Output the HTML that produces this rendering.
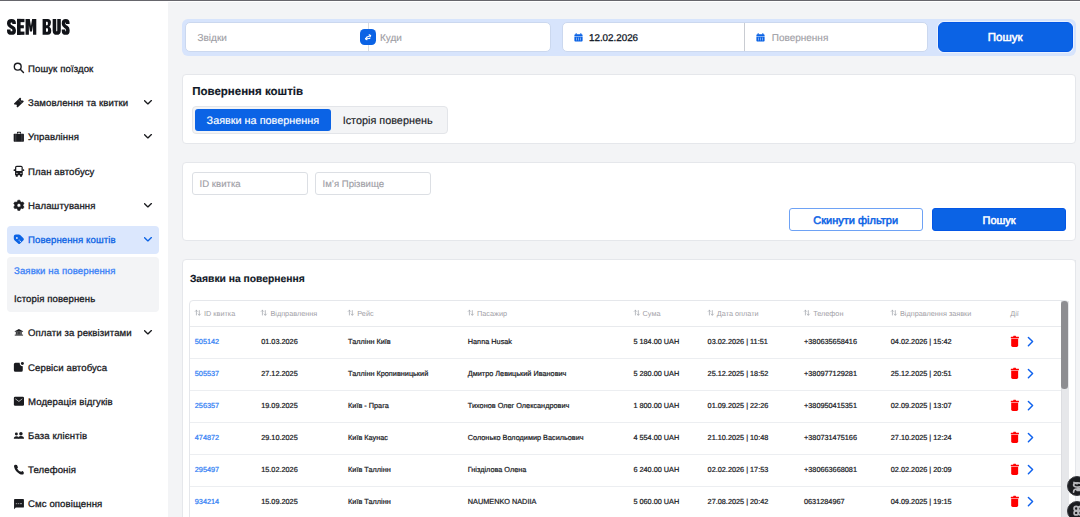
<!DOCTYPE html>
<html><head><meta charset="utf-8">
<style>
*{box-sizing:border-box;margin:0;padding:0}
html,body{width:1080px;height:517px;overflow:hidden}
body{position:relative;background:#f3f4f6;font-family:"Liberation Sans",sans-serif;color:#111827;text-rendering:geometricPrecision}
.a{position:absolute}
.t{white-space:nowrap;-webkit-text-stroke:0.15px currentColor}
.topline{left:0;top:0;width:1080px;height:1px;background:#66666c}
.topwhite{left:0;top:1px;width:1080px;height:1px;background:#fff}
.side{left:0;top:1px;width:168px;height:516px;background:#fff}
.logo{left:7px;top:14px;font-weight:bold;font-size:22px;transform-origin:0 0;transform:scaleX(.63);color:#111318;white-space:nowrap;line-height:26px}
.mt{-webkit-text-stroke:0.3px currentColor;letter-spacing:0.1px}
.med{-webkit-text-stroke:0.3px currentColor}
.cell{-webkit-text-stroke:0.22px currentColor}
.activebg{left:7px;top:226.1px;width:152px;height:27.5px;background:#dbe7fd;border-radius:4px}
.subbg{left:7px;top:257.3px;width:152px;height:54.3px;background:#f3f4f6;border-radius:4px}
.card{left:182px;width:894px;background:#fff;border:1px solid #e5e7eb;border-radius:4px}
.finp{background:#fff;border:1px solid #dcdfe4;border-radius:3px}
.sb{font-weight:bold}

</style></head><body>
<div class="a topline"></div>
<div class="a topwhite"></div>
<div class="a side"></div>
<svg class="a" style="left:0;top:10px;width:80px;height:35px" viewBox="0 0 1080 472"><g fill="none" stroke="#111318" stroke-width="48" stroke-linecap="butt" stroke-linejoin="round"><path d="M190 188 V172 Q190 144 155 144 Q119 144 119 175 V190 Q119 210 150 226 L164 233 Q191 247 191 270 V282 Q191 311 155 311 Q119 311 119 282 V262"/><path d="M735 120 V275 Q735 311 765 311 Q797 311 797 275 V120"/><path d="M915 188 V172 Q915 144 887 144 Q858 144 858 175 V190 Q858 210 885 226 L897 233 Q916 247 916 270 V282 Q916 311 887 311 Q858 311 858 282 V262"/></g><g fill="#111318"><rect x="230" y="120" width="48" height="215"/><rect x="230" y="120" width="100" height="44"/><rect x="230" y="205" width="92" height="42"/><rect x="230" y="291" width="100" height="44"/><path d="M345 120 H402 L418 215 L434 120 H490 V335 H446 V205 L432 290 H404 L390 205 V335 H345Z"/><path d="M575 120 H645 Q688 120 688 170 Q688 208 665 225 Q692 240 692 280 Q692 335 645 335 H575Z M621 160 V205 H638 Q646 205 646 190 V175 Q646 160 638 160Z M621 245 V295 H640 Q648 295 648 280 V262 Q648 245 640 245Z" fill-rule="evenodd"/></g></svg>
<div class="a activebg"></div>
<div class="a subbg"></div>
<svg class="a" style="left:10px;top:58px;width:20px;height:20px;color:#1a1b1f" viewBox="0 0 517 517"><circle cx="200" cy="225" r="88" fill="none" stroke="currentColor" stroke-width="36"/><path d="M272 297 L348 373" stroke="currentColor" stroke-width="38" stroke-linecap="round"/></svg><div class="a t mt" style="left:28px;top:63.98px;font-size:9.6px;line-height:12.0px;color:#1a1b1f">Пошук поїздок</div><svg class="a" style="left:10px;top:95px;width:20px;height:20px;color:#1a1b1f" viewBox="0 0 517 517"><g transform="translate(229 195) rotate(-44)"><path d="M-104 -70 H104 Q114 -70 114 -60 V-30 A30 30 0 0 0 114 30 V60 Q114 70 104 70 H-104 Q-114 70 -114 60 V30 A30 30 0 0 0 -114 -30 V-60 Q-114 -70 -104 -70Z" fill="currentColor"/><path d="M42 -62 V62" stroke="#fff" stroke-opacity=".75" stroke-width="12" stroke-dasharray="16 6"/></g></svg><div class="a t mt" style="left:28px;top:97.98px;font-size:9.6px;line-height:12.0px;color:#1a1b1f">Замовлення та квитки</div><svg class="a" style="left:144px;top:100.40px;width:9px;height:6px;color:#1a1b1f" viewBox="0 0 9 6"><path d="M0.6 0.7 L3.9 3.9 L7.4 0.6" fill="none" stroke="currentColor" stroke-width="1.35" stroke-linecap="round" stroke-linejoin="round"/></svg><svg class="a" style="left:10px;top:128px;width:20px;height:20px;color:#1a1b1f" viewBox="0 0 517 517"><path d="M195 95 H270 Q285 95 285 110 V150 H265 V128 Q265 122 259 122 H206 Q200 122 200 128 V150 H180 V110 Q180 95 195 95Z" fill="currentColor"/><rect x="95" y="150" width="265" height="205" rx="16" fill="currentColor"/><path d="M150 152 V353 M307 152 V353" stroke="#fff" stroke-opacity=".45" stroke-width="11"/></svg><div class="a t mt" style="left:28px;top:131.98px;font-size:9.6px;line-height:12.0px;color:#1a1b1f">Управління</div><svg class="a" style="left:144px;top:134.40px;width:9px;height:6px;color:#1a1b1f" viewBox="0 0 9 6"><path d="M0.6 0.7 L3.9 3.9 L7.4 0.6" fill="none" stroke="currentColor" stroke-width="1.35" stroke-linecap="round" stroke-linejoin="round"/></svg><svg class="a" style="left:10px;top:162px;width:20px;height:20px;color:#1a1b1f" viewBox="0 0 517 517"><path d="M175 100 H285 Q330 100 330 145 V340 H130 V145 Q130 100 175 100Z" fill="currentColor"/><rect x="162" y="132" width="136" height="103" rx="10" fill="#fff"/><circle cx="180" cy="292" r="17" fill="#fff"/><circle cx="283" cy="292" r="17" fill="#fff"/><rect x="93" y="190" width="42" height="42" rx="14" fill="currentColor"/><rect x="325" y="190" width="42" height="42" rx="14" fill="currentColor"/><rect x="148" y="320" width="54" height="62" rx="16" fill="currentColor"/><rect x="258" y="320" width="54" height="62" rx="16" fill="currentColor"/></svg><div class="a t mt" style="left:28px;top:166.98px;font-size:9.6px;line-height:12.0px;color:#1a1b1f">План автобусу</div><svg class="a" style="left:10px;top:196px;width:20px;height:20px;color:#1a1b1f" viewBox="0 0 517 517"><g transform="translate(230 240)"><path d="M-28 -132 H28 L36 -95 A100 100 0 0 1 70 -76 L106 -88 L134 -40 L106 -14 A100 100 0 0 1 106 14 L134 40 L106 88 L70 76 A100 100 0 0 1 36 95 L28 132 H-28 L-36 95 A100 100 0 0 1 -70 76 L-106 88 L-134 40 L-106 14 A100 100 0 0 1 -106 -14 L-134 -40 L-106 -88 L-70 -76 A100 100 0 0 1 -36 -95Z M0 -48 A48 48 0 1 0 0 48 A48 48 0 1 0 0 -48Z" fill="currentColor" fill-rule="evenodd" stroke="currentColor" stroke-width="14" stroke-linejoin="round"/></g></svg><div class="a t mt" style="left:28px;top:200.98px;font-size:9.6px;line-height:12.0px;color:#1a1b1f">Налаштування</div><svg class="a" style="left:144px;top:203.40px;width:9px;height:6px;color:#1a1b1f" viewBox="0 0 9 6"><path d="M0.6 0.7 L3.9 3.9 L7.4 0.6" fill="none" stroke="currentColor" stroke-width="1.35" stroke-linecap="round" stroke-linejoin="round"/></svg><svg class="a" style="left:10px;top:230px;width:20px;height:20px;color:#0b63e5" viewBox="0 0 517 517"><path d="M150 118 H228 Q252 118 270 136 L348 214 Q372 240 348 266 L262 352 Q236 378 210 352 L122 272 Q98 250 98 222 V170 Q98 118 150 118Z" fill="currentColor"/><circle cx="178" cy="208" r="24" fill="#dbe7fd"/><circle cx="236" cy="262" r="14" fill="#dbe7fd" fill-opacity=".8"/><circle cx="268" cy="295" r="15" fill="#dbe7fd"/></svg><div class="a t mt" style="left:28px;top:234.98px;font-size:9.6px;line-height:12.0px;color:#0b63e5">Повернення коштів</div><svg class="a" style="left:144px;top:237.40px;width:9px;height:6px;color:#0b63e5" viewBox="0 0 9 6"><path d="M0.6 0.7 L3.9 3.9 L7.4 0.6" fill="none" stroke="currentColor" stroke-width="1.35" stroke-linecap="round" stroke-linejoin="round"/></svg><div class="a t mt" style="left:14px;top:265.98px;font-size:9.6px;line-height:12.0px;color:#3b82f6">Заявки на повернення</div><div class="a t mt" style="left:14px;top:293.98px;font-size:9.6px;line-height:12.0px;color:#1a1b1f">Історія повернень</div><svg class="a" style="left:10px;top:323px;width:20px;height:20px;color:#1a1b1f" viewBox="0 0 517 517"><path d="M230 152 L338 212 V228 H122 V212Z" fill="currentColor"/><rect x="150" y="228" width="155" height="75" fill="currentColor" fill-opacity=".85"/><path d="M190 232 V298 M270 232 V298" stroke="#fff" stroke-opacity=".35" stroke-width="14"/><rect x="122" y="300" width="216" height="30" rx="6" fill="currentColor" fill-opacity=".75"/></svg><div class="a t mt" style="left:28px;top:327.98px;font-size:9.6px;line-height:12.0px;color:#1a1b1f">Оплати за реквізитами</div><svg class="a" style="left:144px;top:330.40px;width:9px;height:6px;color:#1a1b1f" viewBox="0 0 9 6"><path d="M0.6 0.7 L3.9 3.9 L7.4 0.6" fill="none" stroke="currentColor" stroke-width="1.35" stroke-linecap="round" stroke-linejoin="round"/></svg><svg class="a" style="left:10px;top:357px;width:20px;height:20px;color:#1a1b1f" viewBox="0 0 517 517"><path d="M250 150 H140 Q100 150 100 190 V340 Q100 380 140 380 H290 Q330 380 330 340 V240 A90 90 0 0 1 250 150Z" fill="currentColor"/><circle cx="320" cy="168" r="38" fill="currentColor"/></svg><div class="a t mt" style="left:28px;top:362.98px;font-size:9.6px;line-height:12.0px;color:#1a1b1f">Сервіси автобуса</div><svg class="a" style="left:10px;top:392px;width:20px;height:20px;color:#1a1b1f" viewBox="0 0 517 517"><rect x="100" y="125" width="262" height="230" rx="32" fill="currentColor"/><path d="M145 182 L230 245 L310 182" fill="none" stroke="#fff" stroke-opacity=".85" stroke-width="20" stroke-linecap="round" stroke-linejoin="round"/></svg><div class="a t mt" style="left:28px;top:396.98px;font-size:9.6px;line-height:12.0px;color:#1a1b1f">Модерація відгуків</div><svg class="a" style="left:10px;top:426px;width:20px;height:20px;color:#1a1b1f" viewBox="0 0 517 517"><circle cx="165" cy="205" r="38" fill="currentColor"/><circle cx="282" cy="200" r="45" fill="currentColor"/><path d="M98 332 Q98 262 165 262 Q212 262 222 300 V332Z" fill="currentColor"/><path d="M205 332 Q205 258 282 258 Q362 258 362 332Z" fill="currentColor"/></svg><div class="a t mt" style="left:28px;top:430.98px;font-size:9.6px;line-height:12.0px;color:#1a1b1f">База клієнтів</div><svg class="a" style="left:10px;top:460px;width:20px;height:20px;color:#1a1b1f" viewBox="0 0 517 517"><path d="M118 128 Q150 118 180 132 L205 185 Q205 205 182 222 Q215 290 292 305 Q310 285 328 285 L355 318 Q365 350 340 372 Q300 388 250 360 Q135 300 105 175 Q100 140 118 128Z" fill="currentColor"/></svg><div class="a t mt" style="left:28px;top:464.98px;font-size:9.6px;line-height:12.0px;color:#1a1b1f">Телефонія</div><svg class="a" style="left:10px;top:494px;width:20px;height:20px;color:#1a1b1f" viewBox="0 0 517 517"><path d="M125 128 H340 Q360 128 360 150 V330 Q360 352 340 352 H150 L105 392 V150 Q105 128 125 128Z" fill="currentColor"/><path d="M150 250 H182 M200 250 H232 M252 250 H310" stroke="#fff" stroke-opacity=".75" stroke-width="20"/></svg><div class="a t mt" style="left:28px;top:498.98px;font-size:9.6px;line-height:12.0px;color:#1a1b1f">Смс оповіщення</div>
<div class="a" style="left:182px;top:19px;width:894px;height:36.6px;background:#d7e4fc;border-radius:6px"></div><div class="a" style="left:185px;top:22px;width:366px;height:30px;background:#fff;border:1px solid #cbd8ef;border-radius:5px"></div><div class="a" style="left:368px;top:23px;width:1px;height:28px;background:#d9dce1"></div><div class="a t " style="left:197.5px;top:32.97px;font-size:10px;line-height:12.5px;color:#9fa0a6">Звідки</div><div class="a t " style="left:380px;top:32.97px;font-size:10px;line-height:12.5px;color:#9fa0a6">Куди</div><div class="a" style="left:360px;top:29.2px;width:16.2px;height:15.8px;background:#0b63e5;border-radius:4.5px"></div><svg class="a" style="left:356px;top:25px;width:24px;height:24px" viewBox="0 0 517 517"><g fill="none" stroke="#fff" stroke-width="24" stroke-linecap="round" stroke-linejoin="round"><path d="M228 262 L312 228"/><path d="M284 212 L316 226 L300 258"/><path d="M298 290 L210 296"/><path d="M232 268 L204 296 L236 318"/></g></svg><div class="a" style="left:562px;top:22px;width:366px;height:30px;background:#fff;border:1px solid #cbd8ef;border-radius:5px"></div><div class="a" style="left:744px;top:23px;width:1px;height:28px;background:#c9ccd2"></div><svg class="a" style="left:573.8px;top:32.6px;width:9px;height:9px;color:#0b63e5" viewBox="0 0 9 9"><path d="M2.2 .3 V1.8 M6.8 .3 V1.8" stroke="currentColor" stroke-width="1.1"/><path d="M.4 2.6 C.4 1.8 .9 1.3 1.6 1.3 H7.4 C8.1 1.3 8.6 1.8 8.6 2.6 V3.4 H.4Z M.4 4.1 H8.6 V7.4 C8.6 8 8.1 8.5 7.4 8.5 H1.6 C.9 8.5 .4 8 .4 7.4Z" fill="currentColor"/><path d="M2 5.2 H2.9 M4 5.2 H4.9 M6 5.2 H6.9 M2 6.8 H2.9 M4 6.8 H4.9 M6 6.8 H6.9" stroke="#fff" stroke-width=".7"/></svg><div class="a t med" style="left:589px;top:33.04px;font-size:9.8px;line-height:12.25px;color:#111827">12.02.2026</div><svg class="a" style="left:756px;top:32.6px;width:9px;height:9px;color:#0b63e5" viewBox="0 0 9 9"><path d="M2.2 .3 V1.8 M6.8 .3 V1.8" stroke="currentColor" stroke-width="1.1"/><path d="M.4 2.6 C.4 1.8 .9 1.3 1.6 1.3 H7.4 C8.1 1.3 8.6 1.8 8.6 2.6 V3.4 H.4Z M.4 4.1 H8.6 V7.4 C8.6 8 8.1 8.5 7.4 8.5 H1.6 C.9 8.5 .4 8 .4 7.4Z" fill="currentColor"/><path d="M2 5.2 H2.9 M4 5.2 H4.9 M6 5.2 H6.9 M2 6.8 H2.9 M4 6.8 H4.9 M6 6.8 H6.9" stroke="#fff" stroke-width=".7"/></svg><div class="a t " style="left:771.7px;top:32.97px;font-size:10px;line-height:12.5px;color:#9fa0a6">Повернення</div><div class="a" style="left:938.3px;top:22.2px;width:134.4px;height:29.8px;background:#0b63e5;border:1px solid #0457e6;border-radius:6px;box-shadow:0 0 0 1px #e9f1fe"></div><div class="a t " style="left:987.8px;top:31.02px;font-size:11.5px;line-height:14.38px;color:#fff;-webkit-text-stroke:0.5px #fff">Пошук</div><div class="a card" style="top:74px;height:70px"></div><div class="a t " style="left:192.2px;top:85.02px;font-size:11.5px;line-height:14.38px;font-weight:bold;color:#111827">Повернення коштів</div><div class="a" style="left:192px;top:106.2px;width:255.5px;height:27.4px;background:#f3f4f6;border:1px solid #e3e5e9;border-radius:4px"></div><div class="a" style="left:194.7px;top:109.4px;width:136.1px;height:21.6px;background:#0b63e5;border-radius:3px"></div><div class="a t " style="left:206.6px;top:115.02px;font-size:10.85px;line-height:13.56px;color:#fff">Заявки на повернення</div><div class="a t " style="left:342.7px;top:115.02px;font-size:10.85px;line-height:13.56px;color:#1a1b1f">Історія повернень</div><div class="a card" style="top:162px;height:79px"></div><div class="a finp" style="left:191.5px;top:171.5px;width:116.5px;height:23.3px"></div><div class="a finp" style="left:314.8px;top:171.5px;width:116.5px;height:23.3px"></div><div class="a t " style="left:199.6px;top:178.98px;font-size:9.6px;line-height:12.0px;color:#9fa0a6">ID квитка</div><div class="a t " style="left:322.5px;top:178.98px;font-size:9.6px;line-height:12.0px;color:#9fa0a6">Ім’я Прізвище</div><div class="a" style="left:789px;top:208px;width:134px;height:23px;background:#fff;border:1px solid #6ea2f5;border-radius:3px"></div><div class="a t " style="left:813.3px;top:215.00px;font-size:11px;line-height:13.75px;color:#0b63e5;-webkit-text-stroke:0.5px #0b63e5">Скинути фільтри</div><div class="a" style="left:932.2px;top:208.2px;width:134px;height:23px;background:#0b63e5;border:1px solid #0457e6;border-radius:3px"></div><div class="a t " style="left:982.5px;top:215.00px;font-size:11px;line-height:13.75px;color:#fff;-webkit-text-stroke:0.5px #fff">Пошук</div><div class="a card" style="top:259px;height:300px"></div><div class="a t " style="left:189.9px;top:274.05px;font-size:10.3px;line-height:12.88px;font-weight:bold;color:#111827">Заявки на повернення</div>
<div class="a" style="left:189px;top:299.6px;width:880px;height:240px;border:1px solid #e5e7eb;border-radius:4px"></div><div class="a" style="left:190px;top:325.5px;width:872px;height:1px;background:#e8eaed"></div><svg class="a" style="left:192px;top:305px;width:20px;height:15px;color:#a3a7ae" viewBox="0 0 689 517"><g fill="none" stroke="currentColor" stroke-width="26" stroke-linecap="round" stroke-linejoin="round"><path d="M152 345 V180 M112 220 L152 180 L192 220"/><path d="M252 192 V352 M212 312 L252 352 L292 312"/></g></svg><div class="a t " style="left:204px;top:308.97px;font-size:7.3px;line-height:9.12px;color:#9fa0a6;-webkit-text-stroke:0">ID квитка</div><svg class="a" style="left:258.4px;top:305px;width:20px;height:15px;color:#a3a7ae" viewBox="0 0 689 517"><g fill="none" stroke="currentColor" stroke-width="26" stroke-linecap="round" stroke-linejoin="round"><path d="M152 345 V180 M112 220 L152 180 L192 220"/><path d="M252 192 V352 M212 312 L252 352 L292 312"/></g></svg><div class="a t " style="left:270.4px;top:308.97px;font-size:7.3px;line-height:9.12px;color:#9fa0a6;-webkit-text-stroke:0">Відправлення</div><svg class="a" style="left:345.3px;top:305px;width:20px;height:15px;color:#a3a7ae" viewBox="0 0 689 517"><g fill="none" stroke="currentColor" stroke-width="26" stroke-linecap="round" stroke-linejoin="round"><path d="M152 345 V180 M112 220 L152 180 L192 220"/><path d="M252 192 V352 M212 312 L252 352 L292 312"/></g></svg><div class="a t " style="left:357.3px;top:308.97px;font-size:7.3px;line-height:9.12px;color:#9fa0a6;-webkit-text-stroke:0">Рейс</div><svg class="a" style="left:465px;top:305px;width:20px;height:15px;color:#a3a7ae" viewBox="0 0 689 517"><g fill="none" stroke="currentColor" stroke-width="26" stroke-linecap="round" stroke-linejoin="round"><path d="M152 345 V180 M112 220 L152 180 L192 220"/><path d="M252 192 V352 M212 312 L252 352 L292 312"/></g></svg><div class="a t " style="left:477px;top:308.97px;font-size:7.3px;line-height:9.12px;color:#9fa0a6;-webkit-text-stroke:0">Пасажир</div><svg class="a" style="left:630.6px;top:305px;width:20px;height:15px;color:#a3a7ae" viewBox="0 0 689 517"><g fill="none" stroke="currentColor" stroke-width="26" stroke-linecap="round" stroke-linejoin="round"><path d="M152 345 V180 M112 220 L152 180 L192 220"/><path d="M252 192 V352 M212 312 L252 352 L292 312"/></g></svg><div class="a t " style="left:642.6px;top:308.97px;font-size:7.3px;line-height:9.12px;color:#9fa0a6;-webkit-text-stroke:0">Сума</div><svg class="a" style="left:704.8px;top:305px;width:20px;height:15px;color:#a3a7ae" viewBox="0 0 689 517"><g fill="none" stroke="currentColor" stroke-width="26" stroke-linecap="round" stroke-linejoin="round"><path d="M152 345 V180 M112 220 L152 180 L192 220"/><path d="M252 192 V352 M212 312 L252 352 L292 312"/></g></svg><div class="a t " style="left:716.8px;top:308.97px;font-size:7.3px;line-height:9.12px;color:#9fa0a6;-webkit-text-stroke:0">Дата оплати</div><svg class="a" style="left:801.2px;top:305px;width:20px;height:15px;color:#a3a7ae" viewBox="0 0 689 517"><g fill="none" stroke="currentColor" stroke-width="26" stroke-linecap="round" stroke-linejoin="round"><path d="M152 345 V180 M112 220 L152 180 L192 220"/><path d="M252 192 V352 M212 312 L252 352 L292 312"/></g></svg><div class="a t " style="left:813.2px;top:308.97px;font-size:7.3px;line-height:9.12px;color:#9fa0a6;-webkit-text-stroke:0">Телефон</div><svg class="a" style="left:888px;top:305px;width:20px;height:15px;color:#a3a7ae" viewBox="0 0 689 517"><g fill="none" stroke="currentColor" stroke-width="26" stroke-linecap="round" stroke-linejoin="round"><path d="M152 345 V180 M112 220 L152 180 L192 220"/><path d="M252 192 V352 M212 312 L252 352 L292 312"/></g></svg><div class="a t " style="left:900px;top:308.97px;font-size:7.3px;line-height:9.12px;color:#9fa0a6;-webkit-text-stroke:0">Відправлення заявки</div><div class="a t " style="left:1010.3px;top:308.97px;font-size:7.3px;line-height:9.12px;color:#9fa0a6;-webkit-text-stroke:0">Дії</div><div class="a" style="left:190px;top:357.5px;width:872px;height:1px;background:#eceef1"></div><div class="a t cell" style="left:194.8px;top:336.97px;font-size:7.3px;line-height:9.12px;color:#2f7df4">505142</div><div class="a t cell" style="left:261.2px;top:336.97px;font-size:7.3px;line-height:9.12px;color:#1a1b1f">01.03.2026</div><div class="a t cell" style="left:348.1px;top:336.97px;font-size:7.3px;line-height:9.12px;color:#1a1b1f">Таллінн Київ</div><div class="a t cell" style="left:467.8px;top:336.97px;font-size:7.3px;line-height:9.12px;color:#1a1b1f">Hanna Husak</div><div class="a t cell" style="left:633.4px;top:336.97px;font-size:7.3px;line-height:9.12px;color:#1a1b1f">5 184.00 UAH</div><div class="a t cell" style="left:707.5999999999999px;top:336.97px;font-size:7.3px;line-height:9.12px;color:#1a1b1f">03.02.2026 | 11:51</div><div class="a t cell" style="left:804.0px;top:336.97px;font-size:7.3px;line-height:9.12px;color:#1a1b1f">+380635658416</div><div class="a t cell" style="left:890.8px;top:336.97px;font-size:7.3px;line-height:9.12px;color:#1a1b1f">04.02.2026 | 15:42</div><svg class="a" style="left:1005px;top:332px;width:35px;height:20px" viewBox="0 0 905 517"><rect x="212" y="100" width="72" height="34" rx="10" fill="#ff0b0b"/><rect x="150" y="124" width="210" height="36" rx="8" fill="#ff0000"/><path d="M160 175 H340 V345 Q340 385 300 385 H200 Q160 385 160 345Z" fill="#ff0000"/><path d="M605 140 L713 248 L605 355" fill="none" stroke="#0f62ee" stroke-width="38" stroke-linecap="round" stroke-linejoin="round"/></svg><div class="a" style="left:190px;top:389.5px;width:872px;height:1px;background:#eceef1"></div><div class="a t cell" style="left:194.8px;top:368.97px;font-size:7.3px;line-height:9.12px;color:#2f7df4">505537</div><div class="a t cell" style="left:261.2px;top:368.97px;font-size:7.3px;line-height:9.12px;color:#1a1b1f">27.12.2025</div><div class="a t cell" style="left:348.1px;top:368.97px;font-size:7.3px;line-height:9.12px;color:#1a1b1f">Таллінн Кропивницький</div><div class="a t cell" style="left:467.8px;top:368.97px;font-size:7.3px;line-height:9.12px;color:#1a1b1f">Дмитро Левицький Иванович</div><div class="a t cell" style="left:633.4px;top:368.97px;font-size:7.3px;line-height:9.12px;color:#1a1b1f">5 280.00 UAH</div><div class="a t cell" style="left:707.5999999999999px;top:368.97px;font-size:7.3px;line-height:9.12px;color:#1a1b1f">25.12.2025 | 18:52</div><div class="a t cell" style="left:804.0px;top:368.97px;font-size:7.3px;line-height:9.12px;color:#1a1b1f">+380977129281</div><div class="a t cell" style="left:890.8px;top:368.97px;font-size:7.3px;line-height:9.12px;color:#1a1b1f">25.12.2025 | 20:51</div><svg class="a" style="left:1005px;top:364px;width:35px;height:20px" viewBox="0 0 905 517"><rect x="212" y="100" width="72" height="34" rx="10" fill="#ff0b0b"/><rect x="150" y="124" width="210" height="36" rx="8" fill="#ff0000"/><path d="M160 175 H340 V345 Q340 385 300 385 H200 Q160 385 160 345Z" fill="#ff0000"/><path d="M605 140 L713 248 L605 355" fill="none" stroke="#0f62ee" stroke-width="38" stroke-linecap="round" stroke-linejoin="round"/></svg><div class="a" style="left:190px;top:421.5px;width:872px;height:1px;background:#eceef1"></div><div class="a t cell" style="left:194.8px;top:400.97px;font-size:7.3px;line-height:9.12px;color:#2f7df4">256357</div><div class="a t cell" style="left:261.2px;top:400.97px;font-size:7.3px;line-height:9.12px;color:#1a1b1f">19.09.2025</div><div class="a t cell" style="left:348.1px;top:400.97px;font-size:7.3px;line-height:9.12px;color:#1a1b1f">Київ - Прага</div><div class="a t cell" style="left:467.8px;top:400.97px;font-size:7.3px;line-height:9.12px;color:#1a1b1f">Тихонов Олег Олександрович</div><div class="a t cell" style="left:633.4px;top:400.97px;font-size:7.3px;line-height:9.12px;color:#1a1b1f">1 800.00 UAH</div><div class="a t cell" style="left:707.5999999999999px;top:400.97px;font-size:7.3px;line-height:9.12px;color:#1a1b1f">01.09.2025 | 22:26</div><div class="a t cell" style="left:804.0px;top:400.97px;font-size:7.3px;line-height:9.12px;color:#1a1b1f">+380950415351</div><div class="a t cell" style="left:890.8px;top:400.97px;font-size:7.3px;line-height:9.12px;color:#1a1b1f">02.09.2025 | 13:07</div><svg class="a" style="left:1005px;top:396px;width:35px;height:20px" viewBox="0 0 905 517"><rect x="212" y="100" width="72" height="34" rx="10" fill="#ff0b0b"/><rect x="150" y="124" width="210" height="36" rx="8" fill="#ff0000"/><path d="M160 175 H340 V345 Q340 385 300 385 H200 Q160 385 160 345Z" fill="#ff0000"/><path d="M605 140 L713 248 L605 355" fill="none" stroke="#0f62ee" stroke-width="38" stroke-linecap="round" stroke-linejoin="round"/></svg><div class="a" style="left:190px;top:453.5px;width:872px;height:1px;background:#eceef1"></div><div class="a t cell" style="left:194.8px;top:432.97px;font-size:7.3px;line-height:9.12px;color:#2f7df4">474872</div><div class="a t cell" style="left:261.2px;top:432.97px;font-size:7.3px;line-height:9.12px;color:#1a1b1f">29.10.2025</div><div class="a t cell" style="left:348.1px;top:432.97px;font-size:7.3px;line-height:9.12px;color:#1a1b1f">Київ Каунас</div><div class="a t cell" style="left:467.8px;top:432.97px;font-size:7.3px;line-height:9.12px;color:#1a1b1f">Солонько Володимир Васильович</div><div class="a t cell" style="left:633.4px;top:432.97px;font-size:7.3px;line-height:9.12px;color:#1a1b1f">4 554.00 UAH</div><div class="a t cell" style="left:707.5999999999999px;top:432.97px;font-size:7.3px;line-height:9.12px;color:#1a1b1f">21.10.2025 | 10:48</div><div class="a t cell" style="left:804.0px;top:432.97px;font-size:7.3px;line-height:9.12px;color:#1a1b1f">+380731475166</div><div class="a t cell" style="left:890.8px;top:432.97px;font-size:7.3px;line-height:9.12px;color:#1a1b1f">27.10.2025 | 12:24</div><svg class="a" style="left:1005px;top:428px;width:35px;height:20px" viewBox="0 0 905 517"><rect x="212" y="100" width="72" height="34" rx="10" fill="#ff0b0b"/><rect x="150" y="124" width="210" height="36" rx="8" fill="#ff0000"/><path d="M160 175 H340 V345 Q340 385 300 385 H200 Q160 385 160 345Z" fill="#ff0000"/><path d="M605 140 L713 248 L605 355" fill="none" stroke="#0f62ee" stroke-width="38" stroke-linecap="round" stroke-linejoin="round"/></svg><div class="a" style="left:190px;top:485.5px;width:872px;height:1px;background:#eceef1"></div><div class="a t cell" style="left:194.8px;top:464.97px;font-size:7.3px;line-height:9.12px;color:#2f7df4">295497</div><div class="a t cell" style="left:261.2px;top:464.97px;font-size:7.3px;line-height:9.12px;color:#1a1b1f">15.02.2026</div><div class="a t cell" style="left:348.1px;top:464.97px;font-size:7.3px;line-height:9.12px;color:#1a1b1f">Київ Таллінн</div><div class="a t cell" style="left:467.8px;top:464.97px;font-size:7.3px;line-height:9.12px;color:#1a1b1f">Гнізділова Олена</div><div class="a t cell" style="left:633.4px;top:464.97px;font-size:7.3px;line-height:9.12px;color:#1a1b1f">6 240.00 UAH</div><div class="a t cell" style="left:707.5999999999999px;top:464.97px;font-size:7.3px;line-height:9.12px;color:#1a1b1f">02.02.2026 | 17:53</div><div class="a t cell" style="left:804.0px;top:464.97px;font-size:7.3px;line-height:9.12px;color:#1a1b1f">+380663668081</div><div class="a t cell" style="left:890.8px;top:464.97px;font-size:7.3px;line-height:9.12px;color:#1a1b1f">02.02.2026 | 20:09</div><svg class="a" style="left:1005px;top:460px;width:35px;height:20px" viewBox="0 0 905 517"><rect x="212" y="100" width="72" height="34" rx="10" fill="#ff0b0b"/><rect x="150" y="124" width="210" height="36" rx="8" fill="#ff0000"/><path d="M160 175 H340 V345 Q340 385 300 385 H200 Q160 385 160 345Z" fill="#ff0000"/><path d="M605 140 L713 248 L605 355" fill="none" stroke="#0f62ee" stroke-width="38" stroke-linecap="round" stroke-linejoin="round"/></svg><div class="a t cell" style="left:194.8px;top:496.97px;font-size:7.3px;line-height:9.12px;color:#2f7df4">934214</div><div class="a t cell" style="left:261.2px;top:496.97px;font-size:7.3px;line-height:9.12px;color:#1a1b1f">15.09.2025</div><div class="a t cell" style="left:348.1px;top:496.97px;font-size:7.3px;line-height:9.12px;color:#1a1b1f">Київ Таллінн</div><div class="a t cell" style="left:467.8px;top:496.97px;font-size:7.3px;line-height:9.12px;color:#1a1b1f">NAUMENKO NADIIA</div><div class="a t cell" style="left:633.4px;top:496.97px;font-size:7.3px;line-height:9.12px;color:#1a1b1f">5 060.00 UAH</div><div class="a t cell" style="left:707.5999999999999px;top:496.97px;font-size:7.3px;line-height:9.12px;color:#1a1b1f">27.08.2025 | 20:42</div><div class="a t cell" style="left:804.0px;top:496.97px;font-size:7.3px;line-height:9.12px;color:#1a1b1f">0631284967</div><div class="a t cell" style="left:890.8px;top:496.97px;font-size:7.3px;line-height:9.12px;color:#1a1b1f">04.09.2025 | 19:15</div><svg class="a" style="left:1005px;top:492px;width:35px;height:20px" viewBox="0 0 905 517"><rect x="212" y="100" width="72" height="34" rx="10" fill="#ff0b0b"/><rect x="150" y="124" width="210" height="36" rx="8" fill="#ff0000"/><path d="M160 175 H340 V345 Q340 385 300 385 H200 Q160 385 160 345Z" fill="#ff0000"/><path d="M605 140 L713 248 L605 355" fill="none" stroke="#0f62ee" stroke-width="38" stroke-linecap="round" stroke-linejoin="round"/></svg><div class="a" style="left:1061px;top:300.5px;width:8px;height:217px;background:#e6e7ea;border-left:1px solid #dcdde1"></div><div class="a" style="left:1061.2px;top:300.6px;width:6.6px;height:88.4px;background:#8d8d91;border-radius:3.3px"></div><div class="a" style="left:1069px;top:300.5px;width:6px;height:217px;background:#fff"></div><div class="a" style="left:1075px;top:259.6px;width:1px;height:260px;background:#e5e7eb"></div><div class="a" style="left:1067px;top:475.7px;width:20px;height:20px;background:#1b1c20;border-radius:50%;border:1px solid #3a3b40"></div><div class="a" style="left:1067px;top:500.7px;width:20px;height:20px;background:#1b1c20;border-radius:50%;border:1px solid #3a3b40"></div><svg class="a" style="left:1064px;top:472px;width:16px;height:45px" viewBox="0 0 184 517"><g fill="none" stroke="#b9b9bd" stroke-width="20" stroke-linecap="round"><path d="M184 128 Q110 118 110 150 Q110 178 184 172"/><path d="M110 230 Q110 185 184 195 M150 210 H184"/><path d="M115 120 L150 135"/><circle cx="140" cy="420" r="24"/><circle cx="140" cy="470" r="24"/><circle cx="190" cy="420" r="24"/><circle cx="190" cy="470" r="24"/></g></svg>
</body></html>
